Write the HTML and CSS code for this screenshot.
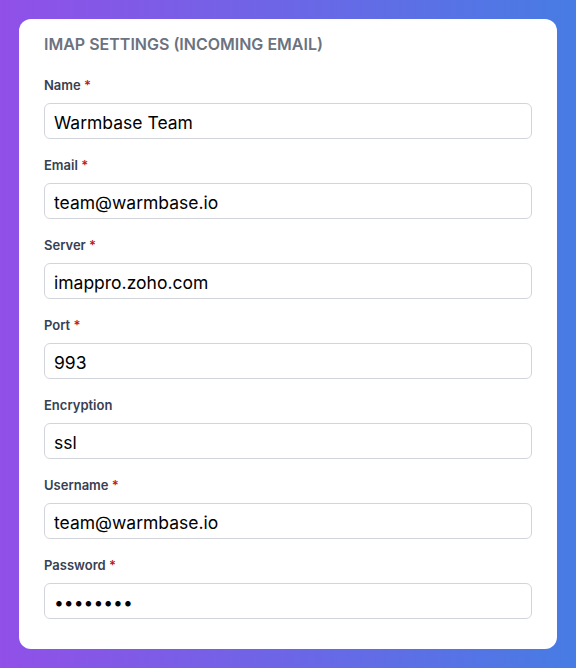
FILE: index.html
```html
<!DOCTYPE html>
<html lang="en">

<head>
    <meta charset="UTF-8">
    <meta name="viewport" content="width=device-width, initial-scale=1.0">
    <title>IMAP Settings</title>
    <link rel="stylesheet" href="styles.css">
</head>

<body>
    <!-- Card de configuracao IMAP -->
    <div class="card">
        <h2 class="card-title">IMAP Settings (Incoming Email)</h2>

        <div class="field">
            <label class="field-label">Name <span class="req">*</span></label>
            <input class="field-input" type="text" value="Warmbase Team">
        </div>

        <div class="field">
            <label class="field-label">Email <span class="req">*</span></label>
            <input class="field-input" type="text" value="team@warmbase.io">
        </div>

        <div class="field">
            <label class="field-label">Server <span class="req">*</span></label>
            <input class="field-input" type="text" value="imappro.zoho.com">
        </div>

        <div class="field">
            <label class="field-label">Port <span class="req">*</span></label>
            <input class="field-input" type="text" value="993">
        </div>

        <div class="field">
            <label class="field-label">Encryption</label>
            <input class="field-input" type="text" value="ssl">
        </div>

        <div class="field">
            <label class="field-label">Username <span class="req">*</span></label>
            <input class="field-input" type="text" value="team@warmbase.io">
        </div>

        <div class="field">
            <label class="field-label">Password <span class="req">*</span></label>
            <input class="field-input" type="password" value="password">
        </div>
    </div>
</body>

</html>
```

FILE: styles.css
```css
/* RESET */
* {
    margin: 0;
    padding: 0;
    box-sizing: border-box;
}

body {
    font-family: 'Inter', 'Helvetica Neue', Arial, sans-serif;
    background: linear-gradient(to right, #9150e8, #477ce4);
    height: 100vh;
    padding: 19px;
    overflow: hidden;
}

/* CARD */
.card {
    background: #ffffff;
    border-radius: 12px;
    padding: 14px 25px 30px;
    height: 630px;
}

.card-title {
    color: #6b7280;
    font-size: 16px;
    font-weight: 600;
    text-transform: uppercase;
    line-height: 22px;
    margin-bottom: 22px;
}

/* CAMPOS */
.field {
    margin-bottom: 18px;
}

.field-label {
    display: block;
    color: #374151;
    font-size: 13px;
    font-weight: 600;
    line-height: 16px;
    margin-bottom: 10px;
}

.req {
    color: #b91c1c;
}

.field-input {
    width: 100%;
    height: 36px;
    padding: 2px 9px 0;
    border: 1px solid #d1d5db;
    border-radius: 6px;
    font-family: 'Inter', 'Helvetica Neue', Arial, sans-serif;
    font-size: 17.5px;
    color: #000000;
    background: #ffffff;
    outline: none;
}
```
